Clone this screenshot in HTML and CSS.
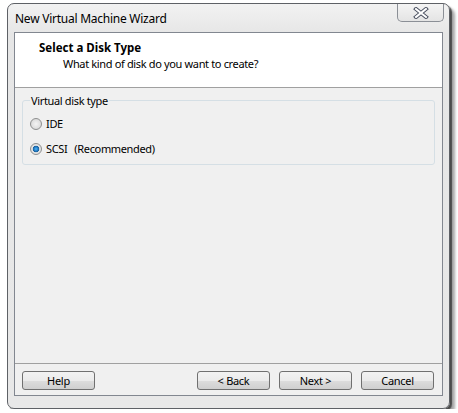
FILE: index.html
```html
<!DOCTYPE html>
<html>
<head>
<meta charset="utf-8">
<link rel="stylesheet" href="styles.css">
</head>
<body>
<div class="window">
  <div class="titlebar">
    <span class="title">New Virtual Machine Wizard</span>
    <span class="close">
      <svg width="16" height="12" viewBox="0 0 16 12">
        <path d="M3 2 L13 10 M13 2 L3 10" stroke="#4a5060" stroke-width="4" stroke-linecap="square" fill="none"/>
        <path d="M3 2 L13 10 M13 2 L3 10" stroke="#ffffff" stroke-width="2" stroke-linecap="square" fill="none"/>
      </svg>
    </span>
  </div>
  <div class="client">
    <div class="header">
      <div class="h-title">Select a Disk Type</div>
      <div class="h-sub">What kind of disk do you want to create?</div>
    </div>
    <div class="content">
      <fieldset class="group">
        <legend>Virtual disk type</legend>
        <label class="radio-row"><span class="radio"></span><span>IDE</span></label>
        <label class="radio-row"><span class="radio checked"></span><span>SCSI</span><span class="rec">(Recommended)</span></label>
      </fieldset>
    </div>
    <div class="footer">
      <button class="btn">Help</button>
      <div class="spacer"></div>
      <button class="btn">&lt; Back</button>
      <button class="btn">Next &gt;</button>
      <button class="btn">Cancel</button>
    </div>
  </div>
</div>
</body>
</html>
```
FILE: styles.css
```css
html, body { margin: 0; padding: 0; background: #ffffff; }
body {
  font-family: "Noto Sans", "Open Sans", sans-serif;
  font-size: 11px;
  letter-spacing: -0.35px;
  color: #000;
  padding: 3px 0 0 7px;
}
.window {
  box-sizing: border-box;
  width: 443px;
  height: 406px;
  border: 1px solid #5e6166;
  border-radius: 7px;
  background: linear-gradient(#f2f2f2, #e6e6e6 30px, #e8e8e8);
  box-shadow: 2px 2px 1px rgba(0,0,0,0.55), 5px 5px 3px rgba(0,0,0,0.35);
  display: flex;
  flex-direction: column;
  padding: 0 6px 12px 6px;
}
.titlebar {
  height: 28px;
  display: flex;
  justify-content: space-between;
  align-items: flex-start;
}
.title {
  font-size: 12px;
  letter-spacing: -0.25px;
  margin-top: 6px;
  margin-left: 1px;
  color: #000;
}
.close {
  box-sizing: border-box;
  width: 47px;
  height: 18px;
  border: 1px solid #8b8f96;
  border-top: none;
  border-radius: 0 0 5px 5px;
  background: linear-gradient(#f4f4f4, #e4e4e4);
  display: flex;
  align-items: center;
  justify-content: center;
  margin-right: -1px;
}
.client {
  flex: 1;
  border: 1px solid #828790;
  background: #f0f0f0;
  display: flex;
  flex-direction: column;
}
.header {
  height: 55px;
  background: #ffffff;
  border-bottom: 1px solid #a0a0a0;
  padding-left: 24px;
  box-sizing: border-box;
}
.h-title {
  font-weight: bold;
  font-size: 11.5px;
  letter-spacing: 0;
  margin-top: 7px;
}
.h-sub {
  margin-left: 24px;
  margin-top: 1px;
}
.content {
  flex: 1;
  padding: 5px 7px 0 7px;
}
.group {
  margin: 0;
  border: 1px solid #d5dfe5;
  border-radius: 3px;
  padding: 9px 7px 4px 7px;
  height: 72px;
  box-sizing: border-box;
}
.group legend {
  padding: 0 1px;
  margin-left: 0;
  color: #000;
}
.radio-row {
  display: flex;
  align-items: center;
  height: 13px;
  margin-bottom: 12px;
  gap: 4px;
}
.rec { margin-left: 3px; }
.radio {
  box-sizing: border-box;
  width: 12px;
  height: 12px;
  border-radius: 50%;
  border: 1px solid #8e8f8f;
  background: radial-gradient(circle at 50% 50%, #f4f4f4 0, #dcdcdc 70%, #c8c8c8 100%);
}
.radio.checked {
  background: radial-gradient(circle at 50% 50%, #57b8f0 0, #2b8ad6 1.5px, #1a5f9a 3px, #e6e6e6 3.6px, #d8d8d8 100%);
}
.footer {
  border-top: 1px solid #a0a0a0;
  height: 32px;
  box-sizing: border-box;
  display: flex;
  align-items: flex-start;
  padding: 7px 8px 0 7px;
  gap: 9px;
}
.spacer { flex: 1; }
.btn {
  width: 73px;
  height: 19px;
  box-sizing: border-box;
  border: 1px solid #707070;
  border-radius: 3px;
  background: linear-gradient(#f2f2f2 0, #ebebeb 50%, #dddddd 51%, #cfcfcf 100%);
  font-family: "Noto Sans", "Open Sans", sans-serif;
  font-size: 11px;
  letter-spacing: -0.3px;
  padding: 0;
  color: #000;
  line-height: 16px;
}
```
